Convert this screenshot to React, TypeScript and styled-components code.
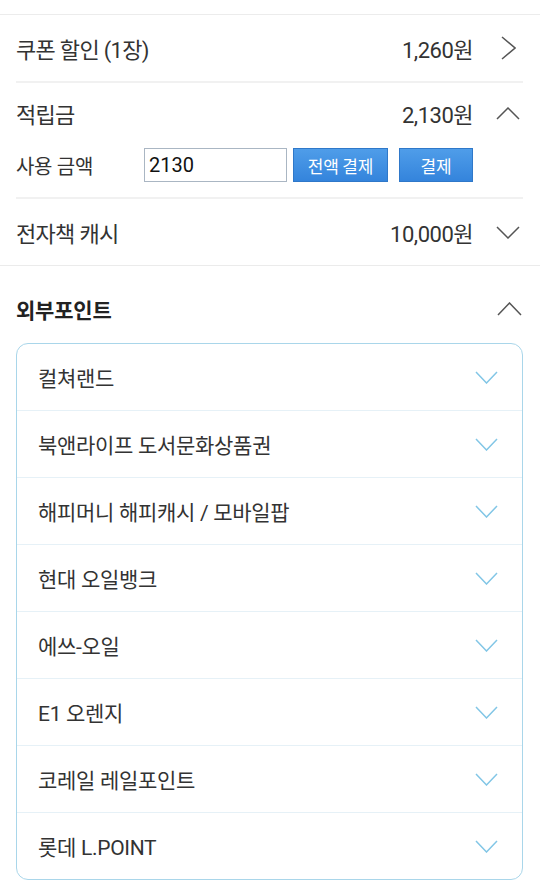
import React from "react";
import styled, { createGlobalStyle } from "styled-components";

const Global = createGlobalStyle`
  html, body { margin: 0; padding: 0; background: #fff; }
  body { font-family: Roboto, "Noto Sans CJK KR", sans-serif; color: #333; }
  * { box-sizing: border-box; }
`;

const Page = styled.div`
  width: 540px;
  background: #fff;
`;

const TopRule = styled.div`
  height: 15px;
  border-bottom: 1px solid #ececec;
`;

const Section = styled.div`
  padding: 0 17px 0 16px;
`;

const Group = styled.div<{ $pb?: number }>`
  border-bottom: 2px solid #f1f1f1;
  padding-bottom: ${(p) => p.$pb ?? 0}px;
`;

const Row = styled.div<{ $h: number }>`
  display: flex;
  align-items: center;
  height: ${(p) => p.$h}px;
`;

const Label = styled.div`
  flex: 1;
  font-size: 22px;
  color: #333;
  letter-spacing: -0.7px;
`;

const Value = styled.div`
  font-size: 22px;
  color: #333;
  letter-spacing: -0.5px;
`;

const IconBox = styled.div<{ $mr: number }>`
  width: 50px;
  display: flex;
  justify-content: flex-end;
  padding-right: ${(p) => p.$mr}px;
  align-items: center;
`;

const UseRow = styled.div`
  display: flex;
  align-items: center;
  height: 34px;
  margin-top: 5px;
`;

const UseLabel = styled.div`
  width: 128px;
  font-size: 20px;
  color: #333;
  letter-spacing: -0.3px;
`;

const AmountInput = styled.input`
  width: 143px;
  height: 34px;
  border: 1px solid #aab6c3;
  padding: 0 4px;
  font-family: Roboto, "Noto Sans CJK KR", sans-serif;
  font-size: 20px;
  color: #111;
  outline: none;
  margin-right: 6px;
`;

const PayButton = styled.button<{ $w: number }>`
  width: ${(p) => p.$w}px;
  height: 34px;
  margin-right: 11px;
  border: 1px solid #2f78c9;
  background: linear-gradient(#4f9de9, #3484dc);
  color: #fff;
  font-family: "Noto Sans CJK KR", sans-serif;
  font-size: 17px;
  letter-spacing: -0.2px;
  padding: 0;
  &:last-child { margin-right: 0; }
`;

const FullRule = styled.div`
  height: 1px;
  background: #ebebeb;
`;

const Header = styled.div`
  display: flex;
  align-items: center;
  height: 60px;
  margin-top: 13px;
  margin-bottom: 4px;
`;

const HeaderTitle = styled.div`
  flex: 1;
  font-size: 21px;
  font-weight: 700;
  color: #222;
  letter-spacing: -0.2px;
`;

const Box = styled.div`
  border: 1px solid #a9d6ea;
  border-radius: 12px;
  overflow: hidden;
`;

const BoxRow = styled.div`
  display: flex;
  align-items: center;
  height: 67px;
  padding: 0 24px 0 21px;
  border-top: 1px solid #e6f1f7;
  &:first-child { border-top: none; height: 66px; }
`;

const BoxLabel = styled.div`
  flex: 1;
  font-size: 21px;
  color: #333;
  letter-spacing: -0.3px;
`;

const Chevron = ({ dir, color, w, h }: { dir: "up" | "down" | "right"; color: string; w: number; h: number }) => {
  const pts =
    dir === "up"
      ? `1,${h - 1} ${w / 2},1 ${w - 1},${h - 1}`
      : dir === "down"
      ? `1,1 ${w / 2},${h - 1} ${w - 1},1`
      : `1,1 ${w - 1},${h / 2} 1,${h - 1}`;
  return (
    <svg width={w} height={h} viewBox={`0 0 ${w} ${h}`}>
      <polyline points={pts} fill="none" stroke={color} strokeWidth="1.5" />
    </svg>
  );
};

const external = [
  "컬쳐랜드",
  "북앤라이프 도서문화상품권",
  "해피머니 해피캐시 / 모바일팝",
  "현대 오일뱅크",
  "에쓰-오일",
  "E1 오렌지",
  "코레일 레일포인트",
  "롯데 L.POINT",
];

export default function App() {
  return (
    <Page>
      <Global />
      <TopRule />
      <Section>
        <Group>
          <Row $h={66}>
            <Label>쿠폰 할인 (1장)</Label>
            <Value>1,260원</Value>
            <IconBox $mr={7}>
              <Chevron dir="right" color="#555" w={15} h={24} />
            </IconBox>
          </Row>
        </Group>
        <Group $pb={15}>
          <Row $h={60}>
            <Label>적립금</Label>
            <Value>2,130원</Value>
            <IconBox $mr={3}>
              <Chevron dir="up" color="#555" w={24} h={13} />
            </IconBox>
          </Row>
          <UseRow>
            <UseLabel>사용 금액</UseLabel>
            <AmountInput defaultValue="2130" />
            <PayButton $w={95}>전액 결제</PayButton>
            <PayButton $w={74}>결제</PayButton>
          </UseRow>
        </Group>
        <Row $h={66}>
          <Label>전자책 캐시</Label>
          <Value>10,000원</Value>
          <IconBox $mr={3}>
            <Chevron dir="down" color="#555" w={24} h={13} />
          </IconBox>
        </Row>
      </Section>
      <FullRule />
      <Section>
        <Header>
          <HeaderTitle>외부포인트</HeaderTitle>
          <IconBox $mr={1}>
            <Chevron dir="up" color="#555" w={25} h={14} />
          </IconBox>
        </Header>
        <Box>
          {external.map((name) => (
            <BoxRow key={name}>
              <BoxLabel>{name}</BoxLabel>
              <Chevron dir="down" color="#82c6e6" w={23} h={13} />
            </BoxRow>
          ))}
        </Box>
      </Section>
    </Page>
  );
}
